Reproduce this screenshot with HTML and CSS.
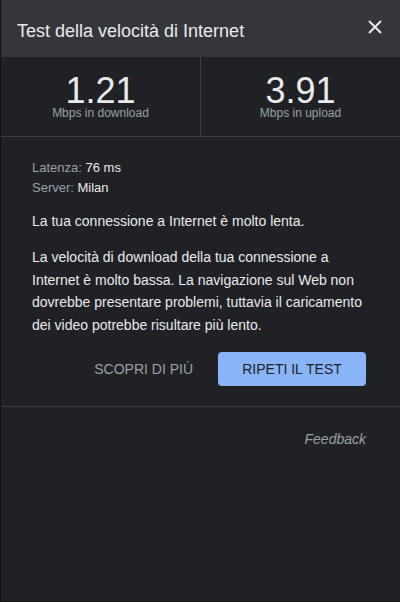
FILE: index.html
```html
<!DOCTYPE html>
<html lang="it">
<head>
  <meta charset="UTF-8">
  <title>Test della velocità di Internet</title>
  <link rel="stylesheet" href="styles.css">
</head>
<body>
  <div class="panel">
    <div class="header">
      <h2>Test della velocità di Internet</h2>
      <button class="close" aria-label="Chiudi">
        <svg width="14" height="14" viewBox="0 0 14 14"><path d="M1 1L13 13M13 1L1 13" stroke="#e8eaed" stroke-width="2"/></svg>
      </button>
    </div>

    <div class="stats">
      <div class="stat">
        <div class="value">1.21</div>
        <div class="unit">Mbps in download</div>
      </div>
      <div class="stat">
        <div class="value">3.91</div>
        <div class="unit">Mbps in upload</div>
      </div>
    </div>

    <div class="details">
      <div class="meta"><span class="key">Latenza:</span> 76 ms</div>
      <div class="meta"><span class="key">Server:</span> Milan</div>

      <p class="summary">La tua connessione a Internet è molto lenta.</p>
      <p class="text">La velocità di download della tua connessione a Internet è molto bassa. La navigazione sul Web non dovrebbe presentare problemi, tuttavia il caricamento dei video potrebbe risultare più lento.</p>

      <div class="actions">
        <button class="link">Scopri di più</button>
        <button class="primary">Ripeti il test</button>
      </div>
    </div>

    <div class="footer">
      <a class="feedback" href="#">Feedback</a>
    </div>
  </div>
</body>
</html>
```

FILE: styles.css
```css
html, body {
  margin: 0;
  height: 100%;
}
body {
  font-family: Arial, "Liberation Sans", sans-serif;
  background: #111214;
}
.panel {
  box-sizing: border-box;
  height: 601px;
  margin-left: 1px;
  background: #202124;
  color: #e8eaed;
}
.header {
  height: 57px;
  background: #35363a;
  display: flex;
  align-items: center;
  justify-content: space-between;
  padding: 0 18px 0 16px;
}
h2 {
  margin: 6px 0 0;
  font-size: 18px;
  font-weight: normal;
  color: #e8eaed;
}
.close {
  background: none;
  border: none;
  padding: 0;
  display: flex;
  margin-top: -4px;
  cursor: pointer;
}
.stats {
  display: flex;
  height: 79px;
  border-bottom: 1px solid #3c3d41;
}
.stat {
  flex: 1;
  text-align: center;
  padding-top: 18px;
}
.stat + .stat {
  border-left: 1px solid #3c3d41;
}
.value {
  font-size: 36px;
  line-height: 32px;
  color: #e8eaed;
}
.unit {
  font-size: 12px;
  line-height: 12px;
  color: #9aa0a6;
}
.details {
  padding: 21px 34px 20px 31px;
  border-bottom: 1px solid #3c3d41;
}
.meta {
  font-size: 13px;
  line-height: 20px;
}
.key {
  color: #9aa0a6;
}
.summary {
  font-size: 14px;
  margin: 13px 0 0;
  line-height: 20px;
}
.text {
  font-size: 14px;
  line-height: 22.7px;
  margin: 15px 0 0;
}
.actions {
  display: flex;
  justify-content: flex-end;
  align-items: center;
  gap: 25px;
  margin-top: 15px;
}
.actions button {
  font-family: inherit;
  font-size: 14px;
  text-transform: uppercase;
  border: none;
  cursor: pointer;
}
.link {
  background: none;
  color: #9aa0a6;
  padding: 0;
}
.primary {
  background: #8ab4f8;
  color: #202124;
  border-radius: 4px;
  width: 148px;
  height: 34px;
}
.footer {
  text-align: right;
  padding: 23px 34px 0 0;
}
.feedback {
  font-size: 14px;
  font-style: italic;
  color: #9aa0a6;
  text-decoration: none;
}
```
